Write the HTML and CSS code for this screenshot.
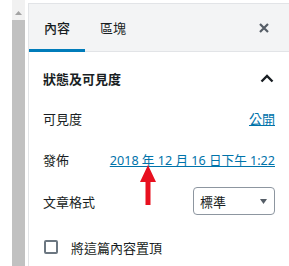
FILE: index.html
```html
<!DOCTYPE html>
<html lang="zh-Hant">
<head>
    <meta charset="UTF-8">
    <meta name="viewport" content="width=device-width, initial-scale=1.0">
    <title>文章設定</title>
    <link rel="stylesheet" href="styles.css">
</head>
<body>
    <div class="frame">
        <div class="gutter"></div>
        <div class="scrollbar">
            <div class="scroll-arrow">
                <svg width="7" height="4" viewBox="0 0 7 4"><path d="M0 4 L3.5 0 L7 4 Z" fill="#a3a3a3"/></svg>
            </div>
            <div class="scroll-thumb"></div>
        </div>
        <div class="gap"></div>

        <div class="sidebar">
            <!-- 分頁 -->
            <div class="tabs">
                <div class="tab active">內容</div>
                <div class="tab">區塊</div>
                <div class="close">
                    <svg width="12" height="12" viewBox="0 0 12 12"><path d="M2 2 L10 10 M10 2 L2 10" stroke="#555d66" stroke-width="2.2"/></svg>
                </div>
            </div>

            <div class="panel">
                <div class="panel-head">
                    <span>狀態及可見度</span>
                    <svg width="14" height="9" viewBox="0 0 14 9"><path d="M1.5 7.5 L7 2 L12.5 7.5" fill="none" stroke="#191e23" stroke-width="2.4"/></svg>
                </div>

                <div class="row row-visibility">
                    <span>可見度</span>
                    <a href="#" class="link">公開</a>
                </div>

                <div class="row row-publish">
                    <span>發佈</span>
                    <a href="#" class="link date">2018 年 12 月 16 日下午 1:22</a>
                </div>

                <div class="row row-format">
                    <span>文章格式</span>
                    <div class="select">
                        <span>標準</span>
                        <svg width="7" height="5" viewBox="0 0 7 5"><path d="M0 0 L7 0 L3.5 5 Z" fill="#555d66"/></svg>
                    </div>
                </div>

                <label class="row row-sticky">
                    <span class="checkbox"></span>
                    <span>將這篇內容置頂</span>
                </label>
            </div>
        </div>

        <!-- 紅色箭頭標示 -->
        <svg class="arrow" width="20" height="42" viewBox="0 0 20 42">
            <path d="M10 0 L18 17 L12.5 17 L12.5 40 L7.5 40 L7.5 17 L2 17 Z" fill="#e8101f"/>
        </svg>
    </div>
</body>
</html>
```

FILE: styles.css
```css
body {
    margin: 0;
    font-family: "Noto Sans", "Noto Sans CJK TC", sans-serif;
    font-size: 13px;
    color: #191e23;
    background: #fff;
}

.frame {
    position: relative;
    display: flex;
    width: 289px;
    height: 266px;
    overflow: hidden;
}

.gutter {
    width: 12px;
    flex-shrink: 0;
}

.scrollbar {
    width: 13px;
    flex-shrink: 0;
    background: #f1f1f1;
    display: flex;
    flex-direction: column;
}

.scroll-arrow {
    height: 20px;
    display: flex;
    justify-content: center;
    padding-top: 11px;
    box-sizing: border-box;
}

.scroll-thumb {
    flex: 1;
    background: #c1c1c1;
}

.gap {
    width: 3px;
    flex-shrink: 0;
}

.sidebar {
    flex: 1;
    border-left: 1px solid #e2e4e7;
    border-top: 1px solid #e2e4e7;
    margin-top: 3px;
    display: flex;
    flex-direction: column;
}

.tabs {
    display: flex;
    align-items: center;
    height: 47px;
    background: #f3f4f5;
    border-bottom: 1px solid #e2e4e7;
}

.tab {
    height: 100%;
    display: flex;
    align-items: center;
    padding: 2px 15px 0;
    box-sizing: border-box;
    border-bottom: 3px solid transparent;
    margin-bottom: -1px;
}

.tab.active {
    border-bottom-color: #007cba;
    font-weight: 500;
}

.close {
    margin-left: auto;
    width: 30px;
    display: flex;
    justify-content: center;
    margin-right: 10px;
}

.panel {
    padding: 0 14px;
}

.panel-head {
    display: flex;
    justify-content: space-between;
    align-items: center;
    height: 52px;
    font-weight: 700;
    padding-right: 1px;
}

.row {
    display: flex;
    justify-content: space-between;
    align-items: center;
}

.row-visibility {
    height: 26px;
    margin-top: 1px;
}

.row-publish {
    height: 26px;
    margin-top: 15px;
}

.row-format {
    height: 30px;
    margin-top: 14px;
}

.row-sticky {
    justify-content: flex-start;
    gap: 13px;
    height: 26px;
    margin-top: 18px;
}

.link {
    color: #0073aa;
    text-decoration: underline;
}

.date {
    font-size: 12.6px;
}

.select {
    width: 82px;
    height: 28px;
    box-sizing: border-box;
    border: 1px solid #8d96a0;
    border-radius: 4px;
    display: flex;
    justify-content: space-between;
    align-items: center;
    padding: 0 7px 0 6px;
}

.checkbox {
    width: 14px;
    height: 14px;
    box-sizing: border-box;
    border: 2px solid #6c7781;
    border-radius: 2px;
    background: #fff;
    margin-left: 1px;
}

.arrow {
    position: absolute;
    left: 138px;
    top: 165px;
}
```
